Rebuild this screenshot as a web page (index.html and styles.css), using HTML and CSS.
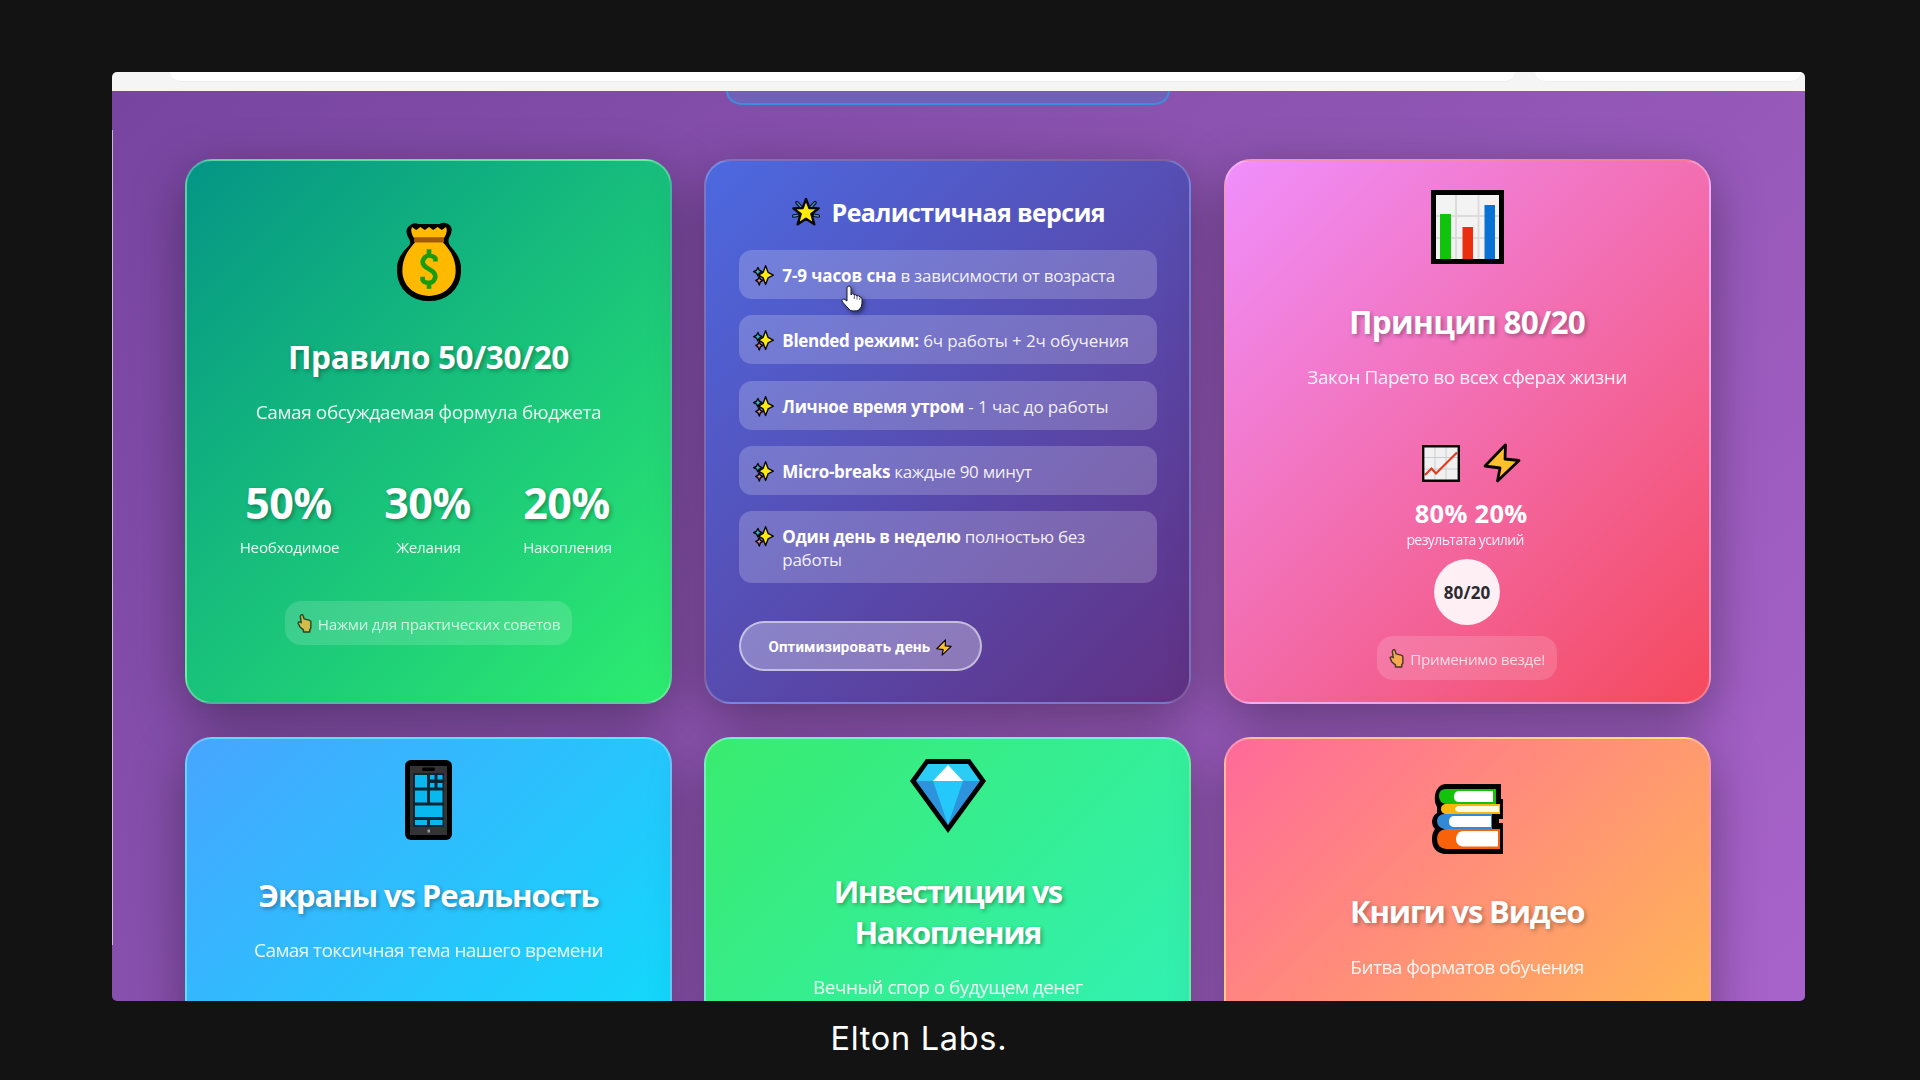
FILE: index.html
```html
<!DOCTYPE html>
<html lang="ru">
<head>
<meta charset="utf-8">
<title>Elton Labs.</title>
<link rel="stylesheet" href="styles.css">
</head>
<body>
<svg class="defs" aria-hidden="true">
  <symbol id="sparkles" viewBox="0 0 60 60">
    <g stroke="#0a0a0a" stroke-width="5" stroke-linejoin="round">
      <path d="M14 7L18 15L26 19L18 23L14 31L10 23L2 19L10 15Z" fill="#35b5cf" stroke-width="4"/>
      <path d="M18 33L21 41L29 44L21 48L18 57L14 48L8 44L14 41Z" fill="#e58a9c" stroke-width="4"/>
      <path d="M36 2L43 21L58 29L43 37L36 56L29 37L16 29L29 21Z" fill="#fdea12" stroke-width="4"/>
    </g>
  </symbol>
  <symbol id="bolt" viewBox="0 0 38 40">
    <path d="M22.5 1.8L2 23L17 25L14.5 38L36 17.5L22 16Z" fill="#ffc02e" stroke="#0a0505" stroke-width="2.8" stroke-linejoin="round"/>
  </symbol>
  <symbol id="point-up" viewBox="0 0 42 54">
    <path d="M11 3Q16 0 17 5L20 14L36 18Q40 20 39 26V41L36 44V51H18V45L8 37L3 26Q4 21 10 23L12 25L9 7Z" fill="#f5b73b" stroke="#22240a" stroke-width="4" stroke-linejoin="round"/>
  </symbol>
</svg>

<main class="window">
  <header class="toolbar">
    <div class="address"></div>
    <div class="search"></div>
  </header>
  <div class="page">
    <div class="pill"></div>
    <section class="grid">
      <article class="card card-budget">
        <svg class="icon" width="64" height="79" viewBox="2 0 60 78" preserveAspectRatio="none">
          <path d="M15 4Q18 1 22 3H42Q47 0 51 4Q54 8 50 15Q48 20 51 24C58 32 62 39 61 50C60 66 48 77 32 77S4 66 3 50C2 39 6 32 14 24Q17 20 13 14Q10 7 15 4Z" fill="#000" stroke="#000" stroke-width="2"/>
          <path d="M16 5Q14 10 18 16H46Q50 10 48 5L44 8L40 5L36 8L32 5L28 8L24 5L20 8Z" fill="#ffb900"/>
          <path d="M18 15H46V20H18Z" fill="#a4590a"/>
          <path d="M19 20H45C52 28 57 36 57 48C57 63 46 73 32 73S7 63 7 48C7 36 12 28 19 20Z" fill="#ffb900"/>
          <path d="M32 27V34M32 59V66M38 39V36Q36 33 32 33T26 39C26 47 38 46 38 54Q37 60 32 60T26 57V54" fill="none" stroke="#189c0c" stroke-width="4.4"/>
        </svg>
        <h2>Правило 50/30/20</h2>
        <p class="sub">Самая обсуждаемая формула бюджета</p>
        <div class="stats">
          <div><strong>50%</strong><span>Необходимое</span></div>
          <div><strong>30%</strong><span>Желания</span></div>
          <div><strong>20%</strong><span>Накопления</span></div>
        </div>
        <div class="hint"><svg width="15" height="19"><use href="#point-up"/></svg><span>Нажми для практических советов</span></div>
      </article>

      <article class="card card-day">
        <h3><svg width="30" height="30" viewBox="0 0 90 90">
          <g stroke="#0b1524" stroke-width="11" stroke-linecap="round"><path d="M18 17L32 32M72 17L58 32M8 57L26 54M82 57L64 54"/></g>
          <g stroke="#3b9cc4" stroke-width="4" stroke-linecap="round"><path d="M18 17L30 30M72 17L60 30M8 57L20 55M82 57L70 55"/></g>
          <path d="M45 6L55 33L83 34L61 51L70 82L45 65L20 82L29 51L7 34L35 33Z" fill="#ffea0c" stroke="#080808" stroke-width="7" stroke-linejoin="round"/>
        </svg><span>Реалистичная версия</span></h3>
        <ul>
          <li><svg><use href="#sparkles"/></svg><p><b>7-9 часов сна</b> в зависимости от возраста</p></li>
          <li><svg><use href="#sparkles"/></svg><p class="loose"><b>Blended режим:</b> 6ч работы + 2ч обучения</p></li>
          <li><svg><use href="#sparkles"/></svg><p class="loose"><b>Личное время утром</b> - 1 час до работы</p></li>
          <li><svg><use href="#sparkles"/></svg><p><b>Micro-breaks</b> каждые 90 минут</p></li>
          <li><svg><use href="#sparkles"/></svg><p><b>Один день в неделю</b> полностью без<br>работы</p></li>
        </ul>
        <button type="button"><span>Оптимизировать день</span><svg width="16" height="17"><use href="#bolt"/></svg></button>
      </article>

      <article class="card card-pareto">
        <svg class="icon" width="73" height="74" viewBox="0 0 73 74">
          <path d="M0 0H73V74H0Z" fill="#000"/><path d="M5 5H68V69H5Z" fill="#f3f3f3"/>
          <path d="M25 5V69M47.500 5V69M5 26H68M5 48H68" stroke="#dcdcdc" stroke-width="2"/>
          <path d="M9 24H20V69H9Z" fill="#10c40c"/><path d="M31.500 37H42V69H31.500Z" fill="#ea2e0e"/><path d="M53.500 15H64V69H53.500Z" fill="#0a72d4"/>
        </svg>
        <h2>Принцип 80/20</h2>
        <p class="sub">Закон Парето во всех сферах жизни</p>
        <div class="pair">
          <svg width="38" height="37" viewBox="0 0 38 37"><path d="M1 1H37V36H1Z" fill="#f1f1f1"/><path d="M13 1V36M24 1V36M1 12.500H37M1 24H37" stroke="#c9cdcf" stroke-width="1"/><path d="M3 30L9.500 23.500L14 28.500L35 7.500" fill="none" stroke="#e23a1b" stroke-width="2.200"/><path d="M1.200 1.200H36.800V35.800H1.200Z" fill="none" stroke="#0a0505" stroke-width="2.400"/></svg>
          <svg width="38" height="40"><use href="#bolt"/></svg>
        </div>
        <div class="ratio">80% 20%</div>
        <div class="ratio-label">результата усилий</div>
        <div class="circle">80/20</div>
        <div class="hint"><svg width="15" height="19"><use href="#point-up"/></svg><span>Применимо везде!</span></div>
      </article>

      <article class="card card-screens">
        <svg class="icon" width="47" height="80" viewBox="0 0 47 80">
          <rect width="47" height="80" rx="6" fill="#000"/><path d="M5 6H42V75H5Z" fill="#343436"/>
          <rect x="17" y="7.500" width="13" height="3.500" rx="1.700" fill="#000"/><path d="M8 13H39V67H8Z" fill="#062634"/>
          <path d="M10 15H22V27.500H10ZM25 15H29.500V19.500H25ZM32.500 15H37.500V19.500H32.500ZM25 23H29.500V27.500H25ZM32.500 23H37.500V27.500H32.500ZM10 30.500H22V42.500H10ZM25 30.500H37.500V42.500H25ZM10 45.500H37.500V57H10ZM10 60H22V65H10ZM25 60H37.500V65H25Z" fill="#09b8ee"/>
          <rect x="22.500" y="69.500" width="2.500" height="3" fill="#999"/>
        </svg>
        <h2>Экраны vs Реальность</h2>
        <p class="sub">Самая токсичная тема нашего времени</p>
      </article>

      <article class="card card-invest">
        <svg class="icon" width="76" height="74" viewBox="0 0 76 74">
          <path d="M16 0H60L76 22L38 74L0 22Z" fill="#000"/>
          <path d="M18 5H58L70 22H6Z" fill="#2bcdf6"/><path d="M38 6L53 22H23Z" fill="#fff"/>
          <path d="M6 22H70L38 66Z" fill="#2d93dc"/><path d="M23 22H53L38 66Z" fill="#24c8fa"/>
        </svg>
        <h2>Инвестиции vs<br>Накопления</h2>
        <p class="sub">Вечный спор о будущем денег</p>
      </article>

      <article class="card card-books">
        <svg class="icon" width="71" height="70" viewBox="0 0 71 70">
          <path d="M13 0H69V15H71V35H67V39H71V70H12Q0 68 0 55Q0 49 3 45Q0 42 0 37Q1 31 5 29V23Q2 18 3 11Q5 1 13 0Z" fill="#000"/>
          <path d="M14 5H64V20H14Q7 19 7 12T14 5Z" fill="#14c20b"/><path d="M26 7H61V18H26Q22 17 22 12.500T26 7Z" fill="#fff"/>
          <path d="M13 20H68V30H13Q9 29 9 25T13 20Z" fill="#f7b70c"/><path d="M26 22H67V28H26Q23 27 23 25T26 22Z" fill="#fffbe2"/>
          <path d="M12 30H60V45H12Q5 43 5 37T12 30Z" fill="#3289d5"/><path d="M21 32H59V43H21Q17 42 17 37.500T21 32Z" fill="#fff"/>
          <path d="M14 45H68V65H14Q5 64 5 55T14 45Z" fill="#f7620a"/><path d="M30 47H66V62.500H30Q24 61 24 55T30 47Z" fill="#fff"/>
        </svg>
        <h2>Книги vs Видео</h2>
        <p class="sub">Битва форматов обучения</p>
      </article>
    </section>
  </div>
</main>
<footer>Elton Labs.</footer>

<svg class="cursor" width="24" height="28" viewBox="0 0 24 28">
  <path d="M6 3Q6 1 8 1T10 3V10Q11 8 13 9L13.500 10Q15 9 16 11Q18 10 19 12Q21 12 21 14V18Q21 22 18 25Q16 26 12 26Q9 26 7 23L1.500 17Q0 14 3 14L6 16Z" fill="#fff" stroke="#1b1b35" stroke-width="1"/>
  <path d="M13.300 10V14M16 11V14.500M18.800 12.500V15" stroke="#34345c" stroke-width=".8"/>
</svg>
</body>
</html>
```
FILE: styles.css
```css
* { box-sizing: border-box; }
body { margin: 0; height: 1080px; overflow: hidden; background: #131313; color: #fff; font-family: "Open Sans", "Noto Sans", sans-serif; padding-top: 72px; }
h2, h3, p, ul { margin: 0; padding: 0; font-weight: 400; }
.defs { position: absolute; width: 0; height: 0; }

.window { position: relative; width: 1692.500px; height: 929px; margin-left: 112px; border-radius: 5px; overflow: hidden; }
.window::before { content: ""; position: absolute; z-index: 2; left: 0; top: 58px; width: 1px; height: 815px; background: rgba(255, 255, 255, .6); }
.toolbar { display: flex; gap: 20px; height: 19px; padding: 0 4px 0 58px; background: #f5f5f5; }
.address, .search { height: 10px; background: #fff; border-radius: 0 0 14px 14px; border-bottom: 1px solid #ececec; }
.address { width: 1345px; }
.search { flex: 1; }

.page { height: 910px; overflow: hidden; background: linear-gradient(135deg, #7745a0, #8c53b0 44%, #a863ca); }
.pill { width: 444px; height: 14px; margin-left: 613.500px; border: 2.5px solid #3d8ddc; border-top: 0; border-radius: 0 0 26px 26px / 0 0 22px 22px; background: #7060b8; }

.grid { display: grid; grid-template-columns: repeat(3, 487px); grid-auto-rows: 545px; gap: 33px 32.300px; margin: 54px 0 0 73px; }
.card { display: flex; flex-direction: column; align-items: center; border: 2px solid rgba(255, 255, 255, .28); border-radius: 27px; box-shadow: 0 16px 52px rgba(0, 0, 0, .36); text-align: center; }
.card-budget { padding-top: 61px; background: linear-gradient(135deg, #049586, #2ded70); }
.card-day { align-items: flex-start; padding: 33px 32.500px 0; background: linear-gradient(135deg, #4c69e0, #613184); border-color: rgba(255, 255, 255, .22); }
.card-pareto { padding-top: 29px; background: linear-gradient(135deg, #f08ffd, #f5495d); }
.card-screens { padding-top: 21px; background: linear-gradient(135deg, #47a5ff, #00ebfa); }
.card-invest { padding-top: 20px; background: linear-gradient(135deg, #39eb6e, #2ff3cc); }
.card-books { padding-top: 45px; background: linear-gradient(135deg, #ff6a9a, #ffd03d); }
.icon { flex: none; display: block; }

h2 { font-size: 31.500px; line-height: 41.300px; font-weight: 700; text-shadow: 2px 2px 4px rgba(0, 0, 0, .3); }
.card-budget h2 { margin-top: 35px; letter-spacing: -.38px; }
.card-screens h2 { margin-top: 35px; font-size: 31px; letter-spacing: -1.070px; }
.card-pareto h2 { margin-top: 37px; letter-spacing: -.700px; }
.card-invest h2 { margin-top: 38px; font-size: 31px; letter-spacing: -1.400px; }
.card-books h2 { margin-top: 37px; font-size: 31px; letter-spacing: -1.200px; }
.sub { margin-top: 22px; font-size: 19px; line-height: 26px; opacity: .9; letter-spacing: -.39px; }
.card-pareto .sub { letter-spacing: -.45px; }
.card-screens .sub { margin-top: 21px; letter-spacing: -.58px; }
.card-invest .sub, .card-books .sub { letter-spacing: -.520px; }
.card-invest .sub { margin-top: 20px; }

.stats { display: grid; grid-template-columns: repeat(3, 139px); margin-top: 52px; }
.stats strong, .stats span { display: block; }
.stats strong { margin-left: -2px; font-size: 43px; line-height: 52px; letter-spacing: -.5px; text-shadow: 2px 2px 4px rgba(0, 0, 0, .3); }
.stats span { margin-top: 8px; font-size: 15.200px; line-height: 20px; letter-spacing: -.22px; opacity: .9; }

.hint { display: flex; align-items: center; gap: 6px; height: 44px; padding: 0 12px; border-radius: 16px; background: rgba(255, 255, 255, .15); font-size: 15.200px; letter-spacing: -.26px; }
.hint span { padding-top: 1px; opacity: .75; }
.hint svg { opacity: .8; }
.card-budget .hint { margin-top: 44px; }
.card-pareto .hint { margin-top: 11px; }

h3 { display: flex; align-items: center; align-self: center; gap: 11px; font-size: 25px; line-height: 35px; font-weight: 700; letter-spacing: -.65px; }
h3 span { padding-top: 1px; }
.card-day ul { display: grid; gap: 16.300px; align-self: stretch; margin-top: 20px; list-style: none; }
.card-day li { display: flex; gap: 8.500px; padding: 14px 14px 12px; border-radius: 13px; background: rgba(255, 255, 255, .2); text-align: left; font-size: 17px; line-height: 23px; letter-spacing: -.29px; color: rgba(255, 255, 255, .92); }
.card-day li svg { flex: none; width: 21px; height: 21px; margin-top: 1px; }
.card-day b { color: #fff; letter-spacing: -.31px; }
.card-day .loose { letter-spacing: -.12px; }
.card-day li:first-child b { letter-spacing: -.1px; }
.card-day button { display: flex; align-items: center; justify-content: center; gap: 6px; width: 243px; height: 50px; margin-top: 38px; border: 2px solid rgba(255, 255, 255, .5); border-radius: 25px; background: rgba(255, 255, 255, .3); color: #fff; font: 700 15px Roboto, sans-serif; letter-spacing: .17px; padding: 2px 0 0; }

.pair { display: flex; align-items: center; gap: 23px; margin-top: 53px; padding-left: 8px; height: 40px; }
.ratio { margin-top: 15px; padding-left: 8px; font-size: 25.500px; line-height: 30px; font-weight: 700; letter-spacing: .28px; }
.ratio-label { margin-top: 3px; padding-right: 4px; font-size: 14px; line-height: 18px; letter-spacing: -.58px; opacity: .9; }
.circle { display: grid; place-items: center; width: 66px; height: 66px; margin-top: 10px; border-radius: 50%; background: rgba(255, 255, 255, .9); color: #2b2b2f; font-size: 17px; font-weight: 700; letter-spacing: .2px; padding-top: 1px; }

footer { margin-left: 830.5px; padding-top: 18px; font: 400 32.500px/40px Inter, sans-serif; letter-spacing: .7px; }
.cursor { position: absolute; left: 841px; top: 285px; filter: drop-shadow(2px 2px 2px rgba(0, 0, 0, .5)); }
```
